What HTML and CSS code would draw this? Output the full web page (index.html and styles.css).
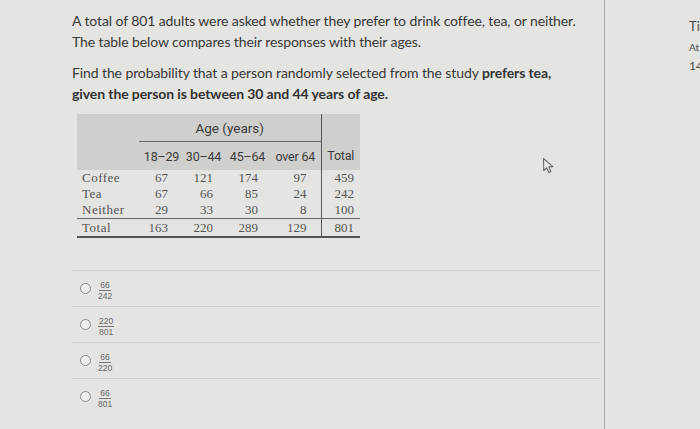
FILE: index.html
```html
<!DOCTYPE html>
<html>
<head>
<meta charset="utf-8">
<link rel="stylesheet" href="styles.css">
</head>
<body>
<div class="page">
  <main class="main">
    <p class="para">A total of 801 adults were asked whether they prefer to drink coffee, tea, or neither.<br>The table below compares their responses with their ages.</p>
    <p class="para q">Find the probability that a person randomly selected from the study <b>prefers tea,</b><br><b>given the person is between 30 and 44 years of age.</b></p>

    <table class="tbl">
      <colgroup>
        <col class="w-lab"><col class="w-1"><col class="w-2"><col class="w-3"><col class="w-4"><col class="w-t">
      </colgroup>
      <thead>
        <tr class="h1">
          <th class="lab"></th>
          <th colspan="4" class="age">Age (years)</th>
          <th class="tot"></th>
        </tr>
        <tr class="h2">
          <th class="lab"></th>
          <th>18–29</th><th>30–44</th><th>45–64</th><th>over 64</th>
          <th class="tot">Total</th>
        </tr>
      </thead>
      <tbody>
        <tr class="first"><td class="lab">Coffee</td><td>67</td><td>121</td><td>174</td><td>97</td><td class="tot">459</td></tr>
        <tr><td class="lab">Tea</td><td>67</td><td>66</td><td>85</td><td>24</td><td class="tot">242</td></tr>
        <tr class="last"><td class="lab">Neither</td><td>29</td><td>33</td><td>30</td><td>8</td><td class="tot">100</td></tr>
        <tr class="sum"><td class="lab">Total</td><td>163</td><td>220</td><td>289</td><td>129</td><td class="tot">801</td></tr>
      </tbody>
    </table>

    <ul class="opts">
      <li class="opt"><span class="radio"></span><span class="frac"><span class="num">66</span><span class="den">242</span></span></li>
      <li class="opt"><span class="radio"></span><span class="frac"><span class="num">220</span><span class="den">801</span></span></li>
      <li class="opt"><span class="radio"></span><span class="frac"><span class="num">66</span><span class="den">220</span></span></li>
      <li class="opt"><span class="radio"></span><span class="frac"><span class="num">66</span><span class="den">801</span></span></li>
    </ul>

    <svg class="cursor" width="14" height="17" viewBox="0 0 14 17">
      <path d="M1.5 1.5 L1.8 13.5 L4.6 10.8 L6.8 15.6 L8.9 14.6 L6.8 9.9 L10.8 9.6 Z" fill="#ececec" stroke="#666" stroke-width="1.1" stroke-linejoin="round"/>
    </svg>
  </main>
  <aside class="side">
    <div class="s1">Ti</div>
    <div class="s2">At</div>
    <div class="s3">14</div>
  </aside>
</div>
</body>
</html>
```

FILE: styles.css
```css
html, body {
  margin: 0;
  padding: 0;
  background: #e4e4e2;
}
body {
  width: 700px;
  height: 429px;
  overflow: hidden;
  font-family: Lato, "Open Sans", sans-serif;
  color: #383838;
}
.page {
  display: grid;
  grid-template-columns: 604px 1px 1fr;
  height: 429px;
}
.page::before {
  content: "";
  grid-column: 2;
  grid-row: 1;
  background: #a9a9a7;
}
.main {
  grid-column: 1;
  grid-row: 1;
  position: relative;
  padding: 10px 0 0 72px;
}
.side {
  grid-column: 3;
  grid-row: 1;
  padding: 17px 0 0 84px;
  color: #4a4a4a;
  font-family: Lato, sans-serif;
}
.s1 { font-size: 13px; line-height: 18px; }
.s2 { font-size: 10px; line-height: 16px; margin-top: 4px; }
.s3 { font-size: 12px; line-height: 18px; margin-top: 2px; }

.para {
  margin: 0;
  font-size: 14px;
  line-height: 21px;
  letter-spacing: -0.1px;
}
.q { margin-top: 10px; }
.q b { font-weight: 700; color: #333; }

.tbl {
  margin: 10px 0 0 5px;
  border-collapse: collapse;
  width: 283px;
  color: #555;
  table-layout: fixed;
}
.w-lab { width: 62px; }
.w-1 { width: 43px; }
.w-2 { width: 43px; }
.w-3 { width: 45px; }
.w-4 { width: 51px; }
.w-t { width: 39px; }
.tbl th, .tbl td { padding: 0; }
.tbl thead { background: #cfcfcd; }
.tbl th {
  font-family: Roboto, "Liberation Sans", sans-serif;
  font-weight: normal;
  font-size: 12.5px;
  letter-spacing: -0.2px;
  color: #3c3c3c;
  white-space: nowrap;
  text-align: center;
}
.h1 th { height: 27px; vertical-align: middle; }
.h1 .age { border-bottom: 1.5px solid #6a6a6a; font-size: 13.5px; letter-spacing: 0; }
.h2 th { height: 28px; vertical-align: middle; }
.h2 th:nth-child(2) { padding-left: 2px; }
.tbl .tot { border-left: 1.5px solid #555; }
.tbl td {
  font-family: "Liberation Serif", serif;
  font-size: 13px;
  line-height: 16px;
  text-align: right;
  padding-right: 12px;
}
.tbl td:nth-child(2) { padding-right: 14px; }
.tbl td:nth-child(5) { padding-right: 14px; }
.tbl td.lab { padding-left: 5px; padding-right: 0; letter-spacing: 0.5px; text-align: left; }
.tbl td.tot { padding-right: 6px; }
.tbl tr.last td { border-bottom: 1.5px solid #666; }
.tbl tr.sum td { padding-top: 1px; padding-bottom: 0; border-bottom: 2.5px solid #555; }

.opts {
  list-style: none;
  margin: 32px 0 0 0;
  padding: 0;
  width: 528px;
}
.opt {
  border-top: 1px solid #cfcfcd;
  height: 35px;
  display: flex;
  align-items: center;
  padding-left: 8px;
  gap: 7px;
}
.radio {
  width: 9px;
  height: 9px;
  border: 1.3px solid #8a8a8a;
  border-radius: 50%;
  background: #ededeb;
}
.frac {
  display: inline-flex;
  flex-direction: column;
  align-items: center;
  font-family: "Liberation Sans", sans-serif;
  font-size: 8.5px;
  line-height: 8px;
  color: #6a6a6a;
  margin-top: 4px;
}
.num { border-bottom: 1px solid #777; padding: 0 1px 1px; }
.den { padding-top: 1px; }

.cursor {
  position: absolute;
  left: 542px;
  top: 157px;
}
```
